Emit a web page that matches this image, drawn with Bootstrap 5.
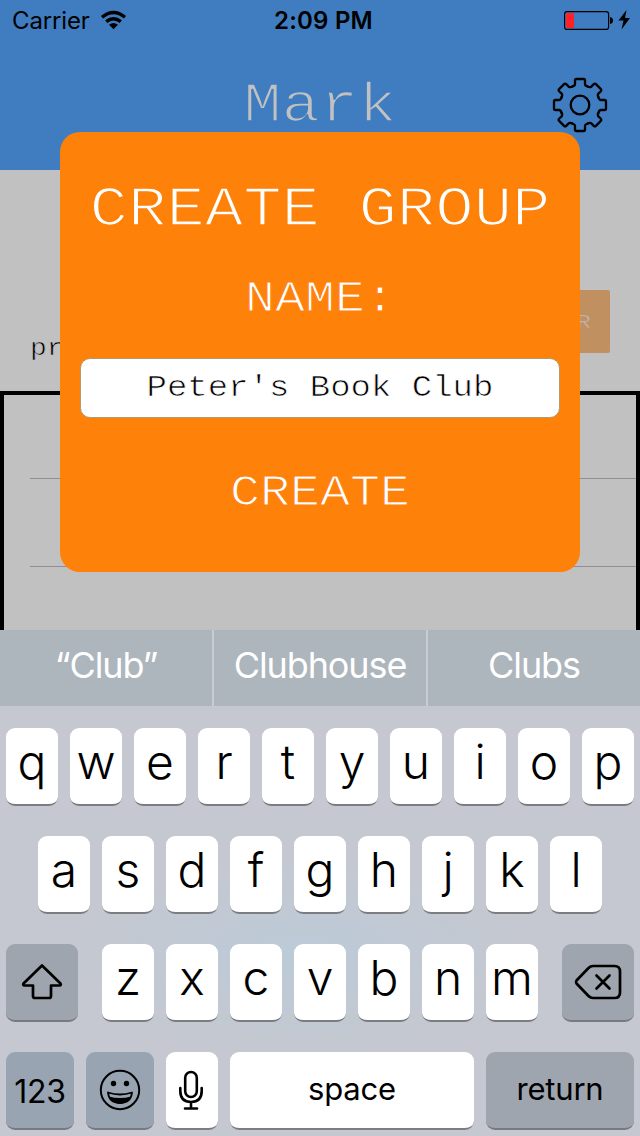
<!DOCTYPE html>
<html lang="en">
<head>
<meta charset="utf-8">
<meta name="viewport" content="width=device-width, initial-scale=1">
<title>Mark</title>
<link href="https://cdn.jsdelivr.net/npm/bootstrap@5.3.0/dist/css/bootstrap.min.css" rel="stylesheet">
<style>
body{font-family:Inter,"Liberation Sans",sans-serif;color:#000;background:#c1c1c1}
.phone{width:640px;height:1136px;background:#c1c1c1}
svg{display:block;overflow:visible}
.topbar{height:170px;background:#3f7dc0}
.status{height:42px;padding:0 10px 0 12px;font-size:24px;line-height:41px}
.carrier{letter-spacing:-.15px}
.clock{left:0;right:0;font-weight:600;letter-spacing:.2px;padding-left:7px}
.typed{font-family:"Liberation Mono","Courier New",monospace;font-weight:400;white-space:pre;margin:0}
.typed>span{display:inline-block;transform:scaleY(.87);transform-origin:50% 71%;-webkit-text-stroke:var(--thin,2px) var(--behind,#fe810a)}
.t64{font-size:64px;line-height:80px}
.t50{font-size:50px;line-height:60px;--thin:1.3px}
.t34{font-size:34px;line-height:56px;--behind:#fff;--thin:.8px}
.t34>span{transform-origin:50% 66%}
.appname{color:#c1c1c1;--behind:#3f7dc0;margin-top:22px}
.gear{right:33px;top:78px}
.intro{height:221px;padding:120px 30px 0}
.order{width:110px;height:63px;border-radius:2px;background:#c19061;color:#c1c1c1;font-size:24px;line-height:62px;padding-right:19px;--behind:#c19061;--thin:.8px}
.prompt{font-size:28px;line-height:34px;margin-top:41px;--behind:#c1c1c1;--thin:.7px}
.entries{height:239px;border:4px solid #000;border-bottom:0}
.entry{height:88px;margin-left:26px;border-bottom:1px solid #909092}
.entry:first-child{height:84px}
.dialog-box{left:60px;top:132px;width:520px;height:440px;border-radius:20px;background:#fe810a;color:#fff;padding:36px 20px 0}
.namefield{height:60px;margin-top:30px;border:1px solid #b39a6c;border-radius:10px;background:#fff;color:#000}
.keyboard{height:506px;background:radial-gradient(ellipse 230px 100px at 300px 325px,#bccad8 0,#bccad800 100%),#c5c8d0}
.hints{height:76px;gap:2px;background:#c8ccd6}
.hints>div{flex:1;background:#adb5bd;color:#fff;font-size:36px;line-height:70px;text-align:center;letter-spacing:-1.1px}
.keys{gap:30px;padding:22px 6px 0}
.keyrow{gap:12px}
.key{width:52px;height:78px;border-radius:9px;background:#fff;border-bottom:2px solid #7b7d80;font-size:48px;font-weight:350;line-height:67px;text-align:center;flex:none}
.key.dim{background:#9ea5ae;border-bottom-color:#777b81}
.key.cool{background:#98a4b2}
.wide{width:72px}.mid{width:68px}
.key.word{font-size:31px;font-weight:400;line-height:74px;letter-spacing:-.2px}
.key.digits{font-size:32px;line-height:79px}
</style>
</head>
<body>
<div class="phone position-relative overflow-hidden d-flex flex-column">
  <header class="topbar position-relative">
    <div class="status d-flex align-items-start position-relative">
      <span class="carrier">Carrier</span>
      <svg class="ms-2" width="30" height="40" viewBox="97 0 30 40"><g fill="none" stroke="#000" stroke-width="3.4"><path d="M101 17.300Q112.500 7.700 124 17.300"/><path d="M105.200 21.600Q112.500 15.700 119.800 21.600"/></g><path d="M108 24.700Q112.500 21.300 117 24.700L112.500 29.300Z"/></svg>
      <span class="clock position-absolute text-center">2:09 PM</span>
      <svg class="ms-auto" width="67" height="40" viewBox="563 0 67 40"><rect x="564.600" y="11.600" width="44" height="17.800" rx="2.500" fill="none" stroke="#000" stroke-width="1.200"/><path d="M566 15q0-2 2-2h6v15h-6q-2 0-2-2z" fill="#ff2127"/><path d="M610 17q3 .5 3 3.500t-3 3.500z"/><path d="M626.500 10L618.500 20.500H623.500L621.500 29.500L630 18H625Z"/></svg>
    </div>
    <h1 class="typed t64 appname text-center"><span>Mark</span></h1>
    <svg class="gear position-absolute" width="54" height="54" viewBox="-27 -27 54 54" fill="none" stroke="#000" stroke-width="2.300" stroke-linecap="round">
      <defs><path id="tooth" d="M-7.650-18.480Q-5-19.300-5-21V-24.500Q-5-26-3.500-26H3.500Q5-26 5-24.500V-21Q5-19.300 7.650-18.480"/></defs>
      <use href="#tooth"/><use href="#tooth" transform="rotate(45)"/><use href="#tooth" transform="rotate(90)"/><use href="#tooth" transform="rotate(135)"/><use href="#tooth" transform="rotate(180)"/><use href="#tooth" transform="rotate(225)"/><use href="#tooth" transform="rotate(270)"/><use href="#tooth" transform="rotate(315)"/>
      <circle r="9.300"/>
    </svg>
  </header>
  <main>
    <div class="intro d-flex justify-content-between">
      <div class="typed prompt"><span>pr</span></div>
      <div class="typed order text-end"><span>R</span></div>
    </div>
    <div class="entries"><div class="entry"></div><div class="entry"></div></div>
  </main>

  <section class="dialog-box position-absolute text-center">
    <h2 class="typed t64" style="margin:0 -10px"><span>CREATE GROUP</span></h2>
    <div class="typed t50" style="margin-top:20px"><span>NAME:</span></div>
    <div class="typed t34 namefield"><span>Peter's Book Club</span></div>
    <div class="typed t50" style="margin-top:44px"><span>CREATE</span></div>
  </section>

  <section class="keyboard">
    <div class="hints d-flex"><div>“Club”</div><div>Clubhouse</div><div>Clubs</div></div>
    <div class="keys d-flex flex-column">
      <div class="keyrow d-flex"><div class="key">q</div><div class="key">w</div><div class="key">e</div><div class="key">r</div><div class="key">t</div><div class="key">y</div><div class="key">u</div><div class="key">i</div><div class="key">o</div><div class="key">p</div></div>
      <div class="keyrow d-flex justify-content-center"><div class="key">a</div><div class="key">s</div><div class="key">d</div><div class="key">f</div><div class="key">g</div><div class="key">h</div><div class="key">j</div><div class="key">k</div><div class="key">l</div></div>
      <div class="d-flex justify-content-between">
        <div class="key dim wide"><svg width="72" height="76" viewBox="6 944 72 76" fill="none" stroke="#000" stroke-width="2.700" stroke-linejoin="round"><path d="M42 965.500L23.500 983.500Q22.500 985.500 24.500 985.500H33V996Q33 998 35 998H49Q51 998 51 996V985.500H59.500Q61.500 985.500 60.500 983.500Z"/></svg></div>
        <div class="keyrow d-flex"><div class="key">z</div><div class="key">x</div><div class="key">c</div><div class="key">v</div><div class="key">b</div><div class="key">n</div><div class="key">m</div></div>
        <div class="key dim wide"><svg width="72" height="76" viewBox="562 944 72 76" fill="none" stroke="#000" stroke-width="2.700" stroke-linejoin="round" stroke-linecap="round"><path d="M576.500 980.500Q575.500 982 576.500 983.500L588.500 996Q590.500 998 593 998H614.500Q620 998 620 992.500V971.500Q620 966 614.500 966H593Q590.500 966 588.500 968ZM596.500 975.500L609.500 988.500M609.500 975.500L596.500 988.500"/></svg></div>
      </div>
      <div class="keyrow d-flex">
        <div class="key dim cool mid word digits">123</div>
        <div class="key dim cool mid"><svg width="68" height="76" viewBox="86 1052 68 76"><circle cx="120" cy="1090" r="19.200" fill="none" stroke="#000" stroke-width="2"/><circle cx="113.500" cy="1083.500" r="2.700"/><circle cx="126.500" cy="1083.500" r="2.700"/><path d="M108 1092.500Q120 1096.500 132 1092.500Q131 1103 120 1103T108 1092.500Z" fill="none" stroke="#000" stroke-width="1.800" stroke-linejoin="round"/><path d="M109 1096.500Q120 1099.500 131 1096.500Q128.500 1103.500 120 1103.500T109 1096.500Z"/></svg></div>
        <div class="key"><svg width="52" height="76" viewBox="166 1052 52 76" fill="none" stroke="#000" stroke-width="2.600" stroke-linecap="round"><rect x="185.200" y="1072" width="11.600" height="25" rx="5.800"/><path d="M180.300 1088V1091Q180.300 1102 191 1102T201.700 1091V1088M191 1102V1108M185 1108.500H197"/></svg></div>
        <div class="key word" style="width:244px">space</div>
        <div class="key dim word" style="width:148px">return</div>
      </div>
    </div>
  </section>
</div>
<script src="https://cdn.jsdelivr.net/npm/bootstrap@5.3.0/dist/js/bootstrap.bundle.min.js"></script>
</body>
</html>
